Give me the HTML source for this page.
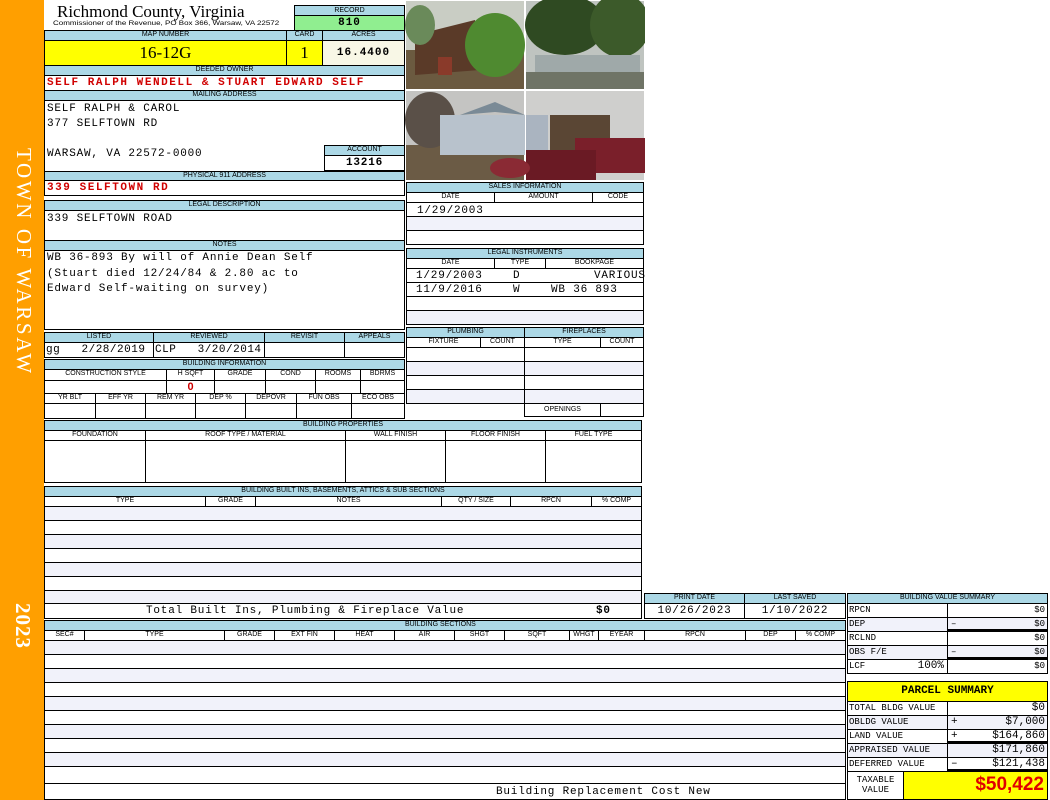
<!DOCTYPE html>
<html><head><meta charset="utf-8">
<style>
*{box-sizing:border-box;margin:0;padding:0}
body{width:1050px;height:800px;background:#fff;position:relative;overflow:hidden;font-family:"Liberation Sans",sans-serif}
div{position:absolute}
.h{background:#acd8e6;border:1px solid #000;font-size:7px;text-align:center;line-height:8px;color:#000;white-space:nowrap;overflow:hidden}
.c{border:1px solid #000;background:#fff}
.a{border:1px solid #000;background:#f1f2fa}
.m{font-family:"Liberation Mono",monospace;font-size:11px;white-space:nowrap;letter-spacing:0.8px}
.r{color:#d00000;font-weight:bold}
.sv{font-family:"Liberation Mono",monospace;font-size:9px;line-height:12px;white-space:nowrap}
</style></head><body>
<!-- side bar -->
<div style="left:0;top:0;width:44px;height:800px;background:#ff9f00"></div>
<div style="left:34px;top:148px;width:0;height:0"><div style="left:0;top:0;transform:rotate(90deg);transform-origin:0 0;white-space:nowrap;font-family:'Liberation Serif',serif;font-size:21px;letter-spacing:2.6px;color:#fff;line-height:21px">TOWN OF WARSAW</div></div>
<div style="left:33px;top:603px;width:0;height:0"><div style="left:0;top:0;transform:rotate(90deg);transform-origin:0 0;white-space:nowrap;font-family:'Liberation Serif',serif;font-size:21px;font-weight:bold;color:#fff;line-height:20px;letter-spacing:1px">2023</div></div>

<!-- header -->
<div style="left:57px;top:2px;font-family:'Liberation Serif',serif;font-size:17px;line-height:19px;white-space:nowrap">Richmond County, Virginia</div>
<div style="left:53px;top:20px;font-size:6.5px;line-height:8px;white-space:nowrap;transform:scaleX(1.23);transform-origin:0 0">Commissioner of the Revenue, PO Box 366, Warsaw, VA 22572</div>
<div class="h" style="left:294px;top:5px;width:111px;height:11px;line-height:9px">RECORD</div>
<div style="left:294px;top:15px;width:111px;height:16px;background:#90ee90;border:1px solid #000;text-align:center;font-family:'Liberation Mono',monospace;font-weight:bold;font-size:11px;line-height:14px;letter-spacing:1px">810</div>
<div class="h" style="left:44px;top:30px;width:243px;height:11px">MAP NUMBER</div>
<div class="h" style="left:286px;top:30px;width:37px;height:11px">CARD</div>
<div class="h" style="left:322px;top:30px;width:83px;height:11px">ACRES</div>
<div style="left:44px;top:40px;width:243px;height:26px;background:#ffff00;border:1px solid #000;text-align:center;font-family:'Liberation Serif',serif;font-size:17px;line-height:24px">16-12G</div>
<div style="left:286px;top:40px;width:37px;height:26px;background:#ffff00;border:1px solid #000;text-align:center;font-family:'Liberation Serif',serif;font-size:17px;line-height:24px">1</div>
<div style="left:322px;top:40px;width:83px;height:26px;background:#f8f7e6;border:1px solid #000;text-align:center;font-family:'Liberation Mono',monospace;font-weight:bold;font-size:11px;line-height:24px;letter-spacing:1px">16.4400</div>
<div class="h" style="left:44px;top:65px;width:361px;height:11px">DEEDED OWNER</div>
<div class="c m r" style="left:44px;top:75px;width:361px;height:16px;padding-left:2px;line-height:15px;letter-spacing:1.55px">SELF RALPH WENDELL &amp; STUART EDWARD SELF</div>
<div class="h" style="left:44px;top:90px;width:361px;height:11px">MAILING ADDRESS</div>
<div class="c" style="left:44px;top:100px;width:361px;height:72px"></div>
<div class="m" style="left:47px;top:102px;line-height:15px">SELF RALPH &amp; CAROL<br>377 SELFTOWN RD<br><br>WARSAW, VA 22572-0000</div>
<div class="h" style="left:324px;top:145px;width:81px;height:11px">ACCOUNT</div>
<div class="c m" style="left:324px;top:155px;width:81px;height:16px;text-align:center;font-weight:bold;line-height:15px">13216</div>
<div class="h" style="left:44px;top:171px;width:361px;height:10px">PHYSICAL 911 ADDRESS</div>
<div class="c m r" style="left:44px;top:180px;width:361px;height:16px;padding-left:2px;line-height:15px;letter-spacing:1.55px">339 SELFTOWN RD</div>
<div class="h" style="left:44px;top:200px;width:361px;height:11px">LEGAL DESCRIPTION</div>
<div class="c m" style="left:44px;top:210px;width:361px;height:31px;padding-left:2px;line-height:16px">339 SELFTOWN ROAD</div>
<div class="h" style="left:44px;top:240px;width:361px;height:11px">NOTES</div>
<div class="c m" style="left:44px;top:250px;width:361px;height:80px;padding-left:2px;line-height:15.5px">WB 36-893 By will of Annie Dean Self<br>(Stuart died 12/24/84 &amp; 2.80 ac to<br>Edward Self-waiting on survey)</div>

<!-- listed -->
<div class="h" style="left:44px;top:332px;width:110px;height:11px">LISTED</div>
<div class="h" style="left:153px;top:332px;width:112px;height:11px">REVIEWED</div>
<div class="h" style="left:264px;top:332px;width:81px;height:11px">REVISIT</div>
<div class="h" style="left:344px;top:332px;width:61px;height:11px">APPEALS</div>
<div class="c m" style="left:44px;top:342px;width:110px;height:16px;line-height:14px;padding-left:1px;letter-spacing:0.5px">gg &nbsp;&nbsp;2/28/2019</div>
<div class="c m" style="left:153px;top:342px;width:112px;height:16px;line-height:14px;padding-left:1px;letter-spacing:0.5px">CLP &nbsp;&nbsp;3/20/2014</div>
<div class="c" style="left:264px;top:342px;width:81px;height:16px"></div>
<div class="c" style="left:344px;top:342px;width:61px;height:16px"></div>
<div class="h" style="left:44px;top:359px;width:361px;height:11px">BUILDING INFORMATION</div>
<div class="h" style="left:44px;top:369px;width:123px;height:12px;background:#fff">CONSTRUCTION STYLE</div>
<div class="h" style="left:166px;top:369px;width:49px;height:12px;background:#fff">H SQFT</div>
<div class="h" style="left:214px;top:369px;width:52px;height:12px;background:#fff">GRADE</div>
<div class="h" style="left:265px;top:369px;width:51px;height:12px;background:#fff">COND</div>
<div class="h" style="left:315px;top:369px;width:46px;height:12px;background:#fff">ROOMS</div>
<div class="h" style="left:360px;top:369px;width:45px;height:12px;background:#fff">BDRMS</div>
<div class="c" style="left:44px;top:380px;width:123px;height:14px"></div>
<div class="c" style="left:166px;top:380px;width:49px;height:14px;text-align:center;color:#c00;font-weight:bold;font-size:11px;line-height:12px">0</div>
<div class="c" style="left:214px;top:380px;width:52px;height:14px"></div>
<div class="c" style="left:265px;top:380px;width:51px;height:14px"></div>
<div class="c" style="left:315px;top:380px;width:46px;height:14px"></div>
<div class="c" style="left:360px;top:380px;width:45px;height:14px"></div>
<div class="h" style="left:44px;top:393px;width:52px;height:11px;background:#fff">YR BLT</div>
<div class="h" style="left:95px;top:393px;width:51px;height:11px;background:#fff">EFF YR</div>
<div class="h" style="left:145px;top:393px;width:51px;height:11px;background:#fff">REM YR</div>
<div class="h" style="left:195px;top:393px;width:51px;height:11px;background:#fff">DEP %</div>
<div class="h" style="left:245px;top:393px;width:52px;height:11px;background:#fff">DEPOVR</div>
<div class="h" style="left:296px;top:393px;width:56px;height:11px;background:#fff">FUN OBS</div>
<div class="h" style="left:351px;top:393px;width:54px;height:11px;background:#fff">ECO OBS</div>
<div class="c" style="left:44px;top:403px;width:52px;height:16px"></div>
<div class="c" style="left:95px;top:403px;width:51px;height:16px"></div>
<div class="c" style="left:145px;top:403px;width:51px;height:16px"></div>
<div class="c" style="left:195px;top:403px;width:51px;height:16px"></div>
<div class="c" style="left:245px;top:403px;width:52px;height:16px"></div>
<div class="c" style="left:296px;top:403px;width:56px;height:16px"></div>
<div class="c" style="left:351px;top:403px;width:54px;height:16px"></div>

<!-- photos -->
<svg style="position:absolute;left:405px;top:0" width="240" height="181">
<rect x="0" y="0" width="240" height="181" fill="#fff"/>
<rect x="1" y="1" width="118" height="88" fill="#c9cdc4"/>
<rect x="1" y="50" width="118" height="39" fill="#6b5a40"/>
<polygon points="10,35 70,20 75,70 10,75" fill="#5a3a28"/>
<rect x="33" y="57" width="14" height="18" fill="#8a3a2a"/>
<ellipse cx="90" cy="45" rx="30" ry="32" fill="#4f8a30"/>
<ellipse cx="15" cy="25" rx="15" ry="20" fill="#6a8a5a"/>
<rect x="121" y="1" width="118" height="88" fill="#bfc4c0"/>
<ellipse cx="160" cy="25" rx="40" ry="30" fill="#2f4a22"/>
<ellipse cx="215" cy="25" rx="30" ry="32" fill="#3c5a2a"/>
<rect x="130" y="55" width="105" height="18" fill="#9fa9a9"/>
<rect x="121" y="72" width="118" height="17" fill="#6f7466"/>
<rect x="1" y="91" width="118" height="89" fill="#c4c4c2"/>
<rect x="1" y="145" width="118" height="35" fill="#6b5b45"/>
<ellipse cx="25" cy="120" rx="25" ry="28" fill="#5a5048"/>
<rect x="35" y="115" width="85" height="40" fill="#b8c2cc"/>
<polygon points="55,115 90,112 120,115 90,102" fill="#7a8a96"/>
<rect x="121" y="91" width="118" height="89" fill="#cfcfcd"/>
<rect x="145" y="115" width="60" height="35" fill="#5a4634"/>
<rect x="121" y="115" width="22" height="35" fill="#aab4c0"/>
<rect x="170" y="138" width="70" height="35" fill="#7a1f2a"/>
<rect x="121" y="150" width="70" height="30" fill="#6a1a24"/>
<ellipse cx="105" cy="168" rx="20" ry="10" fill="#8a2a34"/>
</svg>

<!-- sales -->
<div class="h" style="left:406px;top:182px;width:238px;height:11px">SALES INFORMATION</div>
<div class="h" style="left:406px;top:192px;width:89px;height:11px;background:#fff">DATE</div>
<div class="h" style="left:494px;top:192px;width:99px;height:11px;background:#fff">AMOUNT</div>
<div class="h" style="left:592px;top:192px;width:52px;height:11px;background:#fff">CODE</div>
<div class="c m" style="left:406px;top:202px;width:238px;height:15px;line-height:16px;padding-left:10px">1/29/2003</div>
<div class="a" style="left:406px;top:216px;width:238px;height:15px"></div>
<div class="c" style="left:406px;top:230px;width:238px;height:15px"></div>
<div class="h" style="left:406px;top:248px;width:238px;height:11px">LEGAL INSTRUMENTS</div>
<div class="h" style="left:406px;top:258px;width:89px;height:11px;background:#fff">DATE</div>
<div class="h" style="left:494px;top:258px;width:52px;height:11px;background:#fff">TYPE</div>
<div class="h" style="left:545px;top:258px;width:99px;height:11px;background:#fff">BOOKPAGE</div>
<div class="c" style="left:406px;top:268px;width:238px;height:15px"></div>
<div class="c" style="left:406px;top:282px;width:238px;height:15px"></div>
<div class="c" style="left:406px;top:296px;width:238px;height:15px"></div>
<div class="a" style="left:406px;top:310px;width:238px;height:15px"></div>
<div class="m" style="left:416px;top:269px;line-height:14px">1/29/2003</div>
<div class="m" style="left:513px;top:269px;line-height:14px">D</div>
<div class="m" style="left:594px;top:269px;line-height:14px">VARIOUS</div>
<div class="m" style="left:416px;top:283px;line-height:14px">11/9/2016</div>
<div class="m" style="left:513px;top:283px;line-height:14px">W</div>
<div class="m" style="left:551px;top:283px;line-height:14px">WB 36 893</div>

<!-- plumbing -->
<div class="h" style="left:406px;top:327px;width:119px;height:11px">PLUMBING</div>
<div class="h" style="left:524px;top:327px;width:120px;height:11px">FIREPLACES</div>
<div class="h" style="left:406px;top:337px;width:75px;height:11px;background:#fff">FIXTURE</div>
<div class="h" style="left:480px;top:337px;width:45px;height:11px;background:#fff">COUNT</div>
<div class="h" style="left:524px;top:337px;width:77px;height:11px;background:#fff">TYPE</div>
<div class="h" style="left:600px;top:337px;width:44px;height:11px;background:#fff">COUNT</div>
<div class="c" style="left:406px;top:347px;width:119px;height:15px"></div>
<div class="a" style="left:406px;top:361px;width:119px;height:15px"></div>
<div class="c" style="left:406px;top:375px;width:119px;height:15px"></div>
<div class="a" style="left:406px;top:389px;width:119px;height:15px"></div>
<div class="c" style="left:524px;top:347px;width:120px;height:15px"></div>
<div class="a" style="left:524px;top:361px;width:120px;height:15px"></div>
<div class="c" style="left:524px;top:375px;width:120px;height:15px"></div>
<div class="a" style="left:524px;top:389px;width:120px;height:15px"></div>
<div class="c" style="left:524px;top:403px;width:77px;height:14px;font-size:7px;text-align:center;line-height:12px">OPENINGS</div>
<div class="c" style="left:600px;top:403px;width:44px;height:14px"></div>

<!-- building properties -->
<div class="h" style="left:44px;top:420px;width:598px;height:11px">BUILDING PROPERTIES</div>
<div class="h" style="left:44px;top:430px;width:102px;height:11px;background:#fff">FOUNDATION</div>
<div class="h" style="left:145px;top:430px;width:201px;height:11px;background:#fff">ROOF TYPE / MATERIAL</div>
<div class="h" style="left:345px;top:430px;width:101px;height:11px;background:#fff">WALL FINISH</div>
<div class="h" style="left:445px;top:430px;width:101px;height:11px;background:#fff">FLOOR FINISH</div>
<div class="h" style="left:545px;top:430px;width:97px;height:11px;background:#fff">FUEL TYPE</div>
<div class="c" style="left:44px;top:440px;width:102px;height:43px"></div>
<div class="c" style="left:145px;top:440px;width:201px;height:43px"></div>
<div class="c" style="left:345px;top:440px;width:101px;height:43px"></div>
<div class="c" style="left:445px;top:440px;width:101px;height:43px"></div>
<div class="c" style="left:545px;top:440px;width:97px;height:43px"></div>

<!-- built ins -->
<div class="h" style="left:44px;top:486px;width:598px;height:11px">BUILDING BUILT INS, BASEMENTS, ATTICS &amp; SUB SECTIONS</div>
<div class="h" style="left:44px;top:496px;width:162px;height:11px;background:#fff">TYPE</div>
<div class="h" style="left:205px;top:496px;width:51px;height:11px;background:#fff">GRADE</div>
<div class="h" style="left:255px;top:496px;width:187px;height:11px;background:#fff">NOTES</div>
<div class="h" style="left:441px;top:496px;width:70px;height:11px;background:#fff">QTY / SIZE</div>
<div class="h" style="left:510px;top:496px;width:82px;height:11px;background:#fff">RPCN</div>
<div class="h" style="left:591px;top:496px;width:51px;height:11px;background:#fff">% COMP</div>
<div class="a" style="left:44px;top:506px;width:598px;height:15px"></div>
<div class="c" style="left:44px;top:520px;width:598px;height:15px"></div>
<div class="a" style="left:44px;top:534px;width:598px;height:15px"></div>
<div class="c" style="left:44px;top:548px;width:598px;height:15px"></div>
<div class="a" style="left:44px;top:562px;width:598px;height:15px"></div>
<div class="c" style="left:44px;top:576px;width:598px;height:15px"></div>
<div class="a" style="left:44px;top:590px;width:598px;height:14px"></div>
<div class="c m" style="left:44px;top:603px;width:598px;height:16px;line-height:15px"><span style="position:absolute;left:101px">Total Built Ins, Plumbing &amp; Fireplace Value</span><span style="position:absolute;left:551px;font-weight:bold">$0</span></div>

<!-- print date -->
<div class="h" style="left:644px;top:593px;width:101px;height:11px">PRINT DATE</div>
<div class="h" style="left:744px;top:593px;width:102px;height:11px">LAST SAVED</div>
<div class="c m" style="left:644px;top:603px;width:101px;height:16px;text-align:center;line-height:14px">10/26/2023</div>
<div class="c m" style="left:744px;top:603px;width:102px;height:16px;text-align:center;line-height:14px">1/10/2022</div>

<!-- building sections -->
<div class="h" style="left:44px;top:620px;width:802px;height:11px"><span style="position:absolute;left:360px">BUILDING SECTIONS</span></div>
<div class="h" style="left:44px;top:630px;width:41px;height:11px;background:#fff">SEC#</div>
<div class="h" style="left:84px;top:630px;width:141px;height:11px;background:#fff">TYPE</div>
<div class="h" style="left:224px;top:630px;width:51px;height:11px;background:#fff">GRADE</div>
<div class="h" style="left:274px;top:630px;width:61px;height:11px;background:#fff">EXT FIN</div>
<div class="h" style="left:334px;top:630px;width:61px;height:11px;background:#fff">HEAT</div>
<div class="h" style="left:394px;top:630px;width:61px;height:11px;background:#fff">AIR</div>
<div class="h" style="left:454px;top:630px;width:51px;height:11px;background:#fff">SHGT</div>
<div class="h" style="left:504px;top:630px;width:66px;height:11px;background:#fff">SQFT</div>
<div class="h" style="left:569px;top:630px;width:30px;height:11px;background:#fff">WHGT</div>
<div class="h" style="left:598px;top:630px;width:47px;height:11px;background:#fff">EYEAR</div>
<div class="h" style="left:644px;top:630px;width:102px;height:11px;background:#fff">RPCN</div>
<div class="h" style="left:745px;top:630px;width:51px;height:11px;background:#fff">DEP</div>
<div class="h" style="left:795px;top:630px;width:51px;height:11px;background:#fff">% COMP</div>
<div class="a" style="left:44px;top:640px;width:802px;height:15px"></div>
<div class="c" style="left:44px;top:654px;width:802px;height:15px"></div>
<div class="a" style="left:44px;top:668px;width:802px;height:15px"></div>
<div class="c" style="left:44px;top:682px;width:802px;height:15px"></div>
<div class="a" style="left:44px;top:696px;width:802px;height:15px"></div>
<div class="c" style="left:44px;top:710px;width:802px;height:15px"></div>
<div class="a" style="left:44px;top:724px;width:802px;height:15px"></div>
<div class="c" style="left:44px;top:738px;width:802px;height:15px"></div>
<div class="a" style="left:44px;top:752px;width:802px;height:15px"></div>
<div class="c" style="left:44px;top:766px;width:802px;height:18px"></div>
<div class="c m" style="left:44px;top:783px;width:802px;height:17px;line-height:16px"><span style="position:absolute;left:451px">Building Replacement Cost New</span></div>

<!-- building value summary -->
<div class="h" style="left:847px;top:593px;width:201px;height:11px">BUILDING VALUE SUMMARY</div>
<div class="c sv" style="left:847px;top:603px;width:101px;height:15px;padding-left:1px">RPCN</div>
<div class="c sv" style="left:947px;top:603px;width:101px;height:15px;text-align:right;padding-right:2px">$0</div>
<div class="a sv" style="left:847px;top:617px;width:101px;height:15px;padding-left:1px">DEP</div>
<div class="a sv" style="left:947px;top:617px;width:101px;height:15px;text-align:right;padding-right:2px;border-bottom:3px solid #000"><span style="position:absolute;left:3px">–</span>$0</div>
<div class="c sv" style="left:847px;top:631px;width:101px;height:15px;padding-left:1px">RCLND</div>
<div class="c sv" style="left:947px;top:631px;width:101px;height:15px;text-align:right;padding-right:2px">$0</div>
<div class="a sv" style="left:847px;top:645px;width:101px;height:15px;padding-left:1px">OBS F/E</div>
<div class="a sv" style="left:947px;top:645px;width:101px;height:15px;text-align:right;padding-right:2px;border-bottom:3px solid #000"><span style="position:absolute;left:3px">–</span>$0</div>
<div class="c sv" style="left:847px;top:659px;width:101px;height:15px;padding-left:1px">LCF<span style="position:absolute;right:3px;font-size:11px">100%</span></div>
<div class="c sv" style="left:947px;top:659px;width:101px;height:15px;text-align:right;padding-right:2px">$0</div>

<!-- parcel summary -->
<div style="left:847px;top:681px;width:201px;height:21px;background:#ffff00;border:1px solid #000;text-align:center;font-family:'Liberation Mono',monospace;font-weight:bold;font-size:11px;line-height:19px">PARCEL SUMMARY</div>
<div class="c sv" style="left:847px;top:701px;width:101px;height:15px;padding-left:1px">TOTAL BLDG VALUE</div>
<div class="c sv" style="left:947px;top:701px;width:101px;height:15px;text-align:right;padding-right:2px;font-size:11px">$0</div>
<div class="a sv" style="left:847px;top:715px;width:101px;height:15px;padding-left:1px">OBLDG VALUE</div>
<div class="a sv" style="left:947px;top:715px;width:101px;height:15px;text-align:right;padding-right:2px;font-size:11px"><span style="position:absolute;left:3px">+</span>$7,000</div>
<div class="c sv" style="left:847px;top:729px;width:101px;height:15px;padding-left:1px">LAND VALUE</div>
<div class="c sv" style="left:947px;top:729px;width:101px;height:15px;text-align:right;padding-right:2px;font-size:11px;border-bottom:3px solid #000"><span style="position:absolute;left:3px">+</span>$164,860</div>
<div class="a sv" style="left:847px;top:743px;width:101px;height:15px;padding-left:1px">APPRAISED VALUE</div>
<div class="a sv" style="left:947px;top:743px;width:101px;height:15px;text-align:right;padding-right:2px;font-size:11px">$171,860</div>
<div class="c sv" style="left:847px;top:757px;width:101px;height:15px;padding-left:1px">DEFERRED VALUE</div>
<div class="c sv" style="left:947px;top:757px;width:101px;height:15px;text-align:right;padding-right:2px;font-size:11px;border-bottom:3px solid #000"><span style="position:absolute;left:3px">–</span>$121,438</div>
<div class="c sv" style="left:847px;top:771px;width:57px;height:29px;text-align:center;line-height:10px;padding-top:3px">TAXABLE<br>VALUE</div>
<div style="left:903px;top:771px;width:145px;height:29px;background:#ffff00;border:1px solid #000;text-align:right;padding-right:3px;color:#e00000;font-weight:bold;font-size:19px;line-height:26px">$50,422</div>
</body></html>
